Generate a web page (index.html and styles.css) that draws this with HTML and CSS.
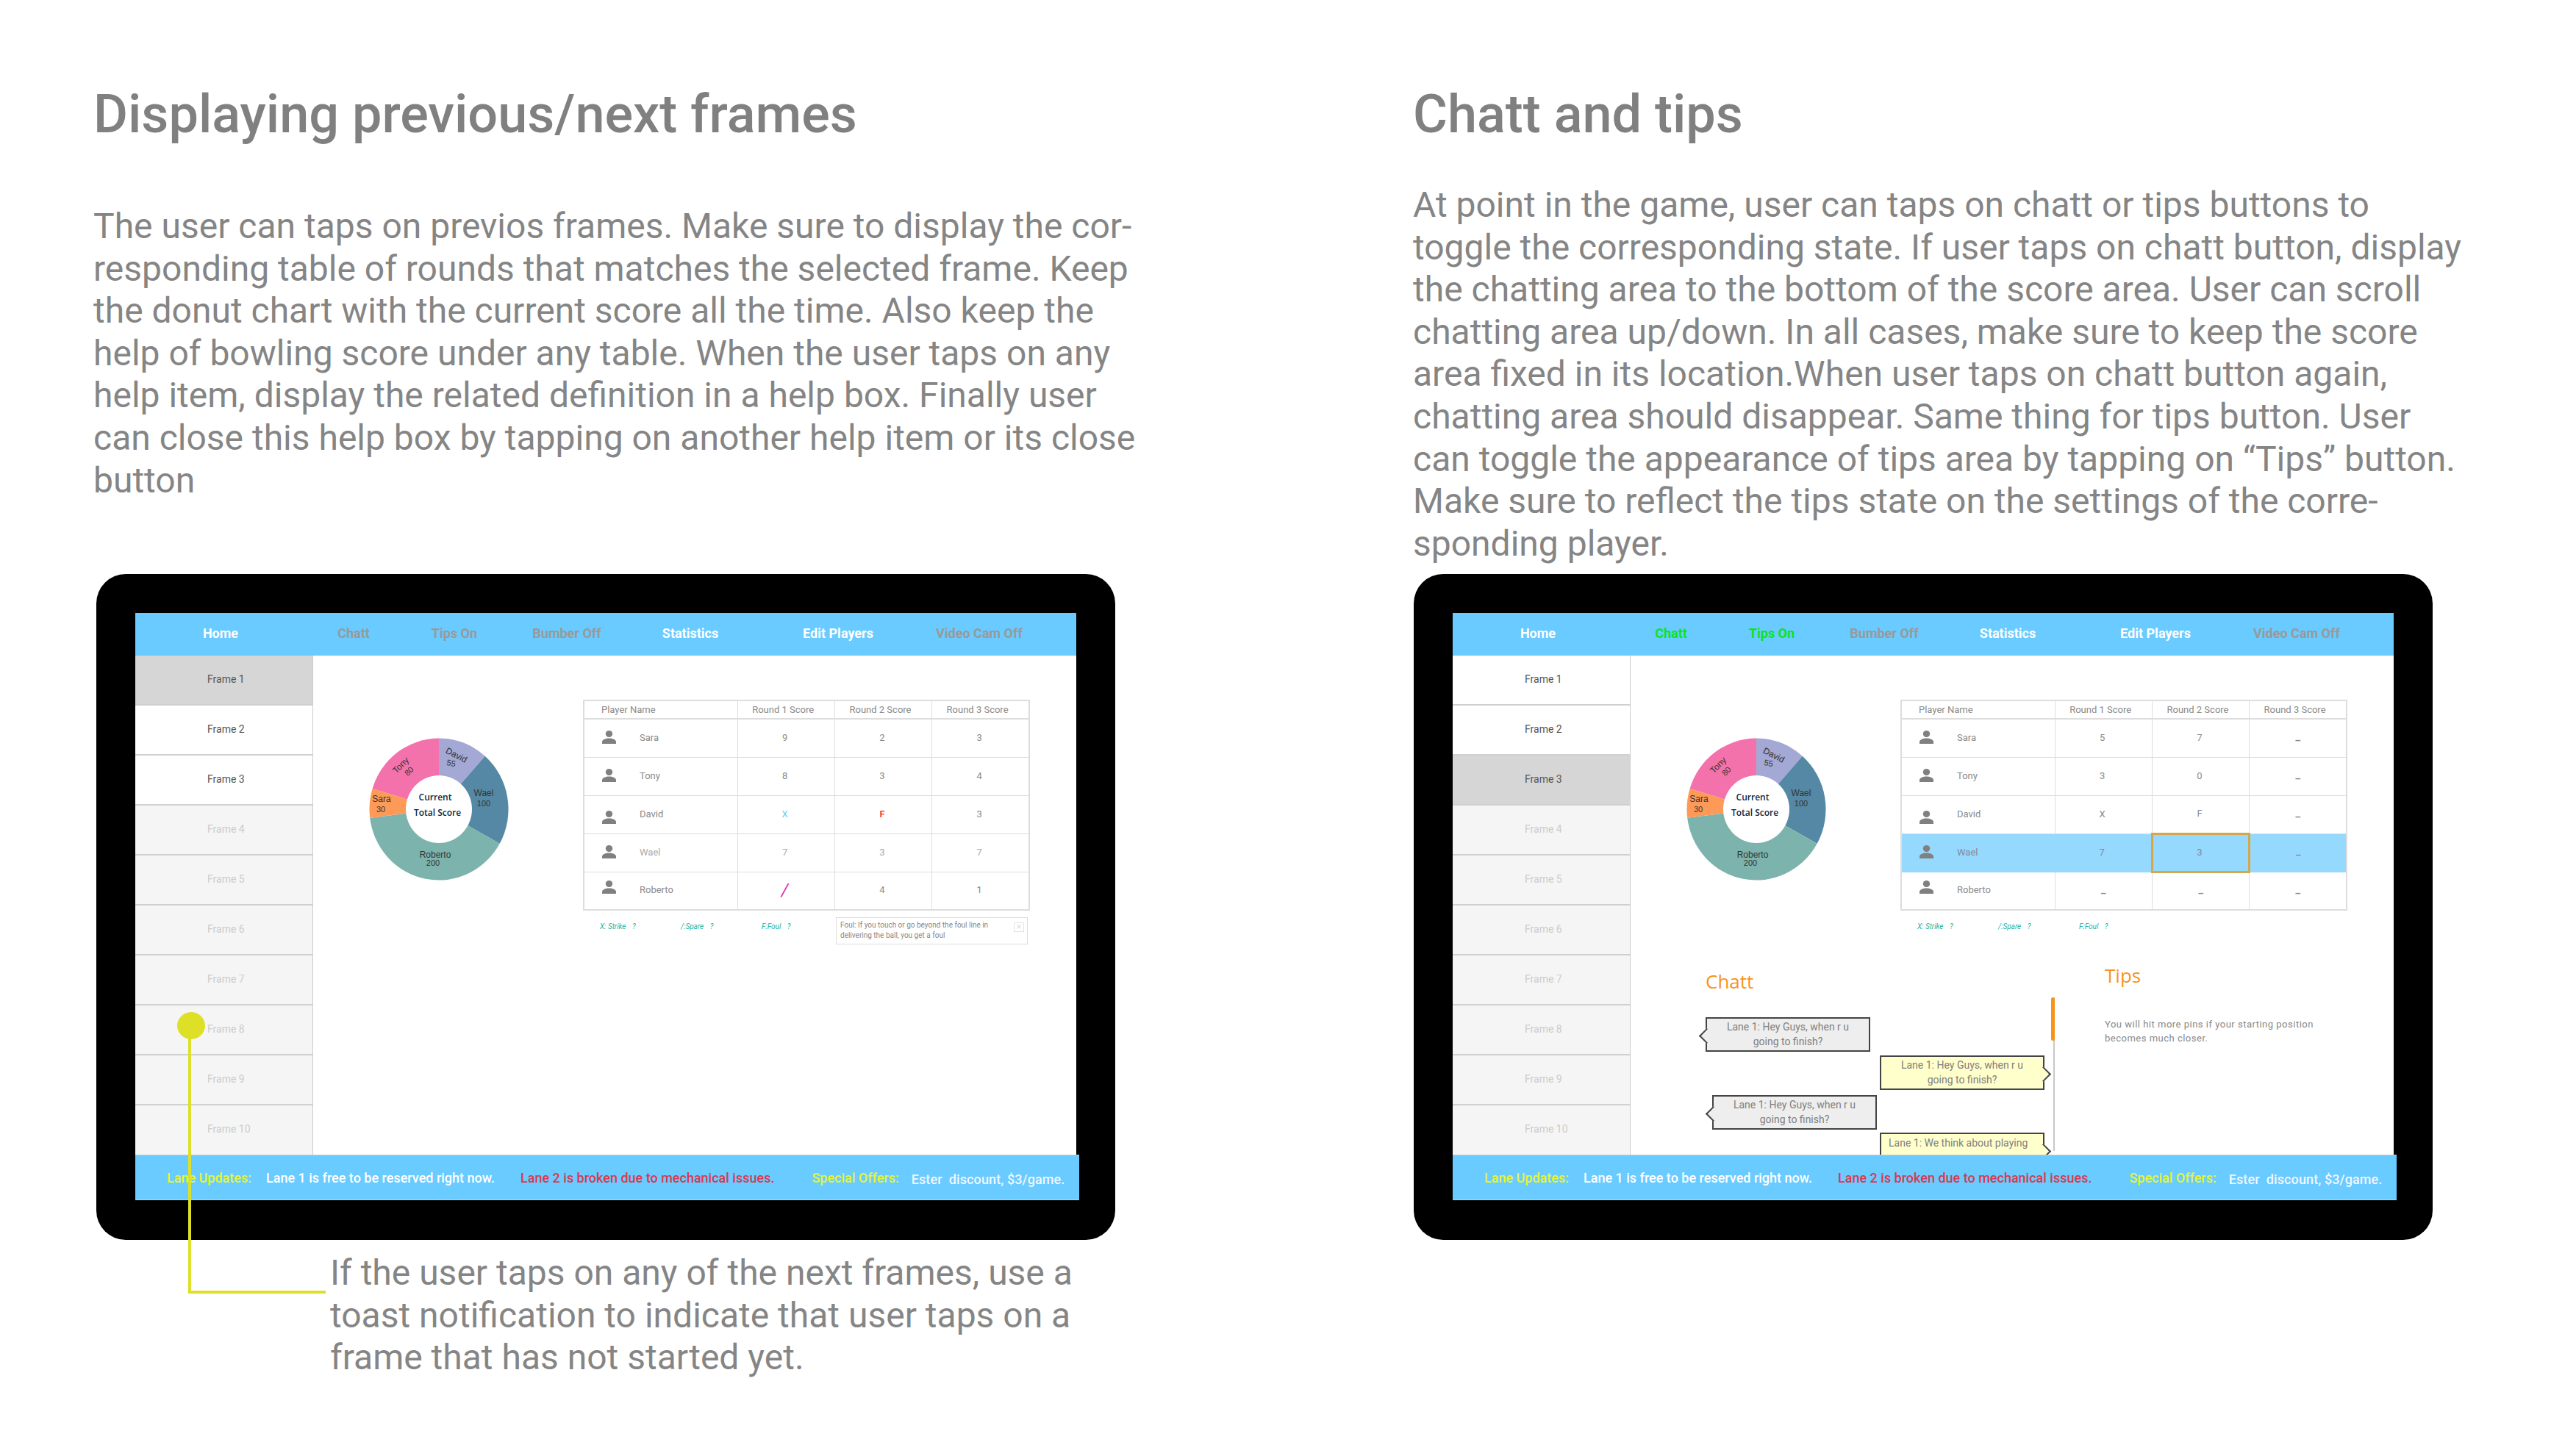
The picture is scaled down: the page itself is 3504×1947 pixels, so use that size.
FILE: index.html
```html
<!DOCTYPE html>
<html lang="en">
<head>
    <meta charset="UTF-8">
    <meta name="viewport" content="width=device-width, initial-scale=1.0">
    <title>Bowling score screens</title>
    <link rel="stylesheet" href="styles.css">
</head>
<body>
    <div class="page">

        <!-- left column -->
        <section class="col col-left">
            <div class="intro">
                <h2 class="title">Displaying previous/next frames</h2>
                <p class="copy copy-left">The user can taps on previos frames. Make sure to display the cor-<br>responding table of rounds that matches the selected frame. Keep<br>the donut chart with the current score all the time. Also keep the<br>help of bowling score under any table. When the user taps on any<br>help item, display the related definition in a help box. Finally user<br>can close this help box by tapping on another help item or its close<br>button</p>
            </div>

            <div class="device">
                <div class="screen">
                    <div class="nav">
                        <span class="nav-item n1">Home</span>
                        <span class="nav-item n2 off">Chatt</span>
                        <span class="nav-item n3 off">Tips On</span>
                        <span class="nav-item n4 off">Bumber Off</span>
                        <span class="nav-item n5">Statistics</span>
                        <span class="nav-item n6">Edit Players</span>
                        <span class="nav-item n7 off">Video Cam Off</span>
                    </div>
                    <div class="body">
                        <div class="frames">
                            <div class="frame current">Frame 1</div>
                            <div class="frame">Frame 2</div>
                            <div class="frame">Frame 3</div>
                            <div class="frame later">Frame 4</div>
                            <div class="frame later">Frame 5</div>
                            <div class="frame later">Frame 6</div>
                            <div class="frame later">Frame 7</div>
                            <div class="frame later">Frame 8</div>
                            <div class="frame later">Frame 9</div>
                            <div class="frame later">Frame 10</div>
                        </div>
                        <div class="main">
                            <div class="top-row">
                                <svg class="donut" width="190" height="194" viewBox="0 0 190 194">
                                    <path fill="#f472ab" d="M95 97L4.6 69.1A94.5 96.5 0 0 1 95 .5Z"/>
                                    <path fill="#a3a8d4" d="M95 97V.5A94.5 96.5 0 0 1 157.7 24.8Z"/>
                                    <path fill="#5588a4" d="M95 97L157.7 24.8A94.5 96.5 0 0 1 177.7 143.8Z"/>
                                    <path fill="#7cb3ad" d="M95 97L177.7 143.8A94.5 96.5 0 0 1 1.2 108.8Z"/>
                                    <path fill="#fd9a57" d="M95 97L1.2 108.8A94.5 96.5 0 0 1 4.6 69.1Z"/>
                                    <ellipse fill="#fff" cx="95" cy="97" rx="45" ry="46"/>
                                    <text class="pie-name" text-anchor="middle" transform="translate(117 27) rotate(27)">David</text>
                                    <text class="pie-num" text-anchor="middle" transform="translate(111 38) rotate(12)">55</text>
                                    <text class="pie-name" text-anchor="middle" transform="translate(46 40) rotate(-45)">Tony</text>
                                    <text class="pie-num" text-anchor="middle" transform="translate(57 48) rotate(-45)">80</text>
                                    <text class="pie-name" text-anchor="middle" x="156" y="79">Wael</text>
                                    <text class="pie-num" text-anchor="middle" x="156" y="93">100</text>
                                    <text class="pie-name" text-anchor="middle" x="17" y="87">Sara</text>
                                    <text class="pie-num" text-anchor="middle" x="16" y="101">30</text>
                                    <text class="pie-name" text-anchor="middle" x="90" y="163">Roberto</text>
                                    <text class="pie-num" text-anchor="middle" x="87" y="174">200</text>
                                    <text class="pie-total" text-anchor="middle" x="90" y="85">Current</text>
                                    <text class="pie-total" text-anchor="middle" x="93" y="106">Total Score</text>
                                </svg>
                                <div class="score">
                                    <table class="score-table">
                                        <tr><th class="c-name">Player Name</th><th>Round 1 Score</th><th>Round 2 Score</th><th>Round 3 Score</th></tr>
                                        <tr>
                                            <td class="c-name"><div class="player"><svg class="person" width="19" height="18" viewBox="0 0 19 18"><ellipse cx="9.5" cy="4.5" rx="4.7" ry="4.5"/><path d="M0 18V15.5C0 12 5 10.5 9.5 10.5S19 12 19 15.5V18Z"/></svg><span>Sara</span></div></td>
                                            <td>9</td><td>2</td><td>3</td>
                                        </tr>
                                        <tr>
                                            <td class="c-name"><div class="player"><svg class="person" width="19" height="18" viewBox="0 0 19 18"><ellipse cx="9.5" cy="4.5" rx="4.7" ry="4.5"/><path d="M0 18V15.5C0 12 5 10.5 9.5 10.5S19 12 19 15.5V18Z"/></svg><span>Tony</span></div></td>
                                            <td>8</td><td>3</td><td>4</td>
                                        </tr>
                                        <tr>
                                            <td class="c-name"><div class="player"><svg class="person low" width="19" height="18" viewBox="0 0 19 18"><ellipse cx="9.5" cy="4.5" rx="4.7" ry="4.5"/><path d="M0 18V15.5C0 12 5 10.5 9.5 10.5S19 12 19 15.5V18Z"/></svg><span>David</span></div></td>
                                            <td class="strike">X</td><td class="foul">F</td><td>3</td>
                                        </tr>
                                        <tr class="dim">
                                            <td class="c-name"><div class="player"><svg class="person" width="19" height="18" viewBox="0 0 19 18"><ellipse cx="9.5" cy="4.5" rx="4.7" ry="4.5"/><path d="M0 18V15.5C0 12 5 10.5 9.5 10.5S19 12 19 15.5V18Z"/></svg><span>Wael</span></div></td>
                                            <td>7</td><td>3</td><td>7</td>
                                        </tr>
                                        <tr>
                                            <td class="c-name"><div class="player"><svg class="person high" width="19" height="18" viewBox="0 0 19 18"><ellipse cx="9.5" cy="4.5" rx="4.7" ry="4.5"/><path d="M0 18V15.5C0 12 5 10.5 9.5 10.5S19 12 19 15.5V18Z"/></svg><span>Roberto</span></div></td>
                                            <td class="spare">/</td><td>4</td><td>1</td>
                                        </tr>
                                    </table>
                                    <div class="legend">
                                        <span class="legend-item l1">X: Strike <i>?</i></span>
                                        <span class="legend-item l2">/:Spare <i>?</i></span>
                                        <span class="legend-item l3">F:Foul <i>?</i></span>
                                        <div class="help-box">Foul: If you touch or go beyond the foul line in<br>delivering the ball, you get a foul<span class="help-close">×</span></div>
                                    </div>
                                </div>
                            </div>
                        </div>
                    </div>
                    <div class="ticker">
                        <span class="t-offer">Lane Updates:</span>
                        <span class="t-free">Lane 1 is free to be reserved right now.</span>
                        <span class="t-broken">Lane 2 is broken due to mechanical issues.</span>
                        <span class="t-offer t-special">Special Offers:</span>
                        <span class="t-ester">Ester&nbsp; discount, $3/game.</span>
                    </div>
                </div>

                <!-- yellow callout to the text under the tablet -->
                <div class="callout-dot"></div>
                <div class="callout-line"></div>
            </div>

            <p class="copy caption">If the user taps on any of the next frames, use a<br>toast notification to indicate that user taps on a<br>frame that has not started yet.</p>
        </section>

        <!-- right column -->
        <section class="col col-right">
            <div class="intro">
                <h2 class="title">Chatt and tips</h2>
                <p class="copy copy-right">At point in the game, user can taps on chatt or tips buttons to<br>toggle the corresponding state. If user taps on chatt button, display<br>the chatting area to the bottom of the score area. User can scroll<br>chatting area up/down. In all cases, make sure to keep the score<br>area fixed in its location.When user taps on chatt button again,<br>chatting area should disappear. Same thing for tips button. User<br>can toggle the appearance of tips area by tapping on “Tips” button.<br>Make sure to reflect the tips state on the settings of the corre-<br>sponding player.</p>
            </div>

            <div class="device">
                <div class="screen">
                    <div class="nav">
                        <span class="nav-item n1">Home</span>
                        <span class="nav-item n2 on">Chatt</span>
                        <span class="nav-item n3 on">Tips On</span>
                        <span class="nav-item n4 off">Bumber Off</span>
                        <span class="nav-item n5">Statistics</span>
                        <span class="nav-item n6">Edit Players</span>
                        <span class="nav-item n7 off">Video Cam Off</span>
                    </div>
                    <div class="body">
                        <div class="frames">
                            <div class="frame">Frame 1</div>
                            <div class="frame">Frame 2</div>
                            <div class="frame current">Frame 3</div>
                            <div class="frame later">Frame 4</div>
                            <div class="frame later">Frame 5</div>
                            <div class="frame later">Frame 6</div>
                            <div class="frame later">Frame 7</div>
                            <div class="frame later">Frame 8</div>
                            <div class="frame later">Frame 9</div>
                            <div class="frame later">Frame 10</div>
                        </div>
                        <div class="main">
                            <div class="top-row">
                                <svg class="donut" width="190" height="194" viewBox="0 0 190 194">
                                    <path fill="#f472ab" d="M95 97L4.6 69.1A94.5 96.5 0 0 1 95 .5Z"/>
                                    <path fill="#a3a8d4" d="M95 97V.5A94.5 96.5 0 0 1 157.7 24.8Z"/>
                                    <path fill="#5588a4" d="M95 97L157.7 24.8A94.5 96.5 0 0 1 177.7 143.8Z"/>
                                    <path fill="#7cb3ad" d="M95 97L177.7 143.8A94.5 96.5 0 0 1 1.2 108.8Z"/>
                                    <path fill="#fd9a57" d="M95 97L1.2 108.8A94.5 96.5 0 0 1 4.6 69.1Z"/>
                                    <ellipse fill="#fff" cx="95" cy="97" rx="45" ry="46"/>
                                    <text class="pie-name" text-anchor="middle" transform="translate(117 27) rotate(27)">David</text>
                                    <text class="pie-num" text-anchor="middle" transform="translate(111 38) rotate(12)">55</text>
                                    <text class="pie-name" text-anchor="middle" transform="translate(46 40) rotate(-45)">Tony</text>
                                    <text class="pie-num" text-anchor="middle" transform="translate(57 48) rotate(-45)">80</text>
                                    <text class="pie-name" text-anchor="middle" x="156" y="79">Wael</text>
                                    <text class="pie-num" text-anchor="middle" x="156" y="93">100</text>
                                    <text class="pie-name" text-anchor="middle" x="17" y="87">Sara</text>
                                    <text class="pie-num" text-anchor="middle" x="16" y="101">30</text>
                                    <text class="pie-name" text-anchor="middle" x="90" y="163">Roberto</text>
                                    <text class="pie-num" text-anchor="middle" x="87" y="174">200</text>
                                    <text class="pie-total" text-anchor="middle" x="90" y="85">Current</text>
                                    <text class="pie-total" text-anchor="middle" x="93" y="106">Total Score</text>
                                </svg>
                                <div class="score">
                                    <table class="score-table">
                                        <tr><th class="c-name">Player Name</th><th>Round 1 Score</th><th>Round 2 Score</th><th>Round 3 Score</th></tr>
                                        <tr>
                                            <td class="c-name"><div class="player"><svg class="person" width="19" height="18" viewBox="0 0 19 18"><ellipse cx="9.5" cy="4.5" rx="4.7" ry="4.5"/><path d="M0 18V15.5C0 12 5 10.5 9.5 10.5S19 12 19 15.5V18Z"/></svg><span>Sara</span></div></td>
                                            <td>5</td><td>7</td><td class="dash">–</td>
                                        </tr>
                                        <tr>
                                            <td class="c-name"><div class="player"><svg class="person" width="19" height="18" viewBox="0 0 19 18"><ellipse cx="9.5" cy="4.5" rx="4.7" ry="4.5"/><path d="M0 18V15.5C0 12 5 10.5 9.5 10.5S19 12 19 15.5V18Z"/></svg><span>Tony</span></div></td>
                                            <td>3</td><td>0</td><td class="dash">–</td>
                                        </tr>
                                        <tr>
                                            <td class="c-name"><div class="player"><svg class="person low" width="19" height="18" viewBox="0 0 19 18"><ellipse cx="9.5" cy="4.5" rx="4.7" ry="4.5"/><path d="M0 18V15.5C0 12 5 10.5 9.5 10.5S19 12 19 15.5V18Z"/></svg><span>David</span></div></td>
                                            <td>X</td><td>F</td><td class="dash">–</td>
                                        </tr>
                                        <tr class="dim selected">
                                            <td class="c-name"><div class="player"><svg class="person" width="19" height="18" viewBox="0 0 19 18"><ellipse cx="9.5" cy="4.5" rx="4.7" ry="4.5"/><path d="M0 18V15.5C0 12 5 10.5 9.5 10.5S19 12 19 15.5V18Z"/></svg><span>Wael</span></div></td>
                                            <td>7</td><td class="picked">3</td><td class="dash">–</td>
                                        </tr>
                                        <tr>
                                            <td class="c-name"><div class="player"><svg class="person high" width="19" height="18" viewBox="0 0 19 18"><ellipse cx="9.5" cy="4.5" rx="4.7" ry="4.5"/><path d="M0 18V15.5C0 12 5 10.5 9.5 10.5S19 12 19 15.5V18Z"/></svg><span>Roberto</span></div></td>
                                            <td class="dash">–</td><td class="dash">–</td><td class="dash">–</td>
                                        </tr>
                                    </table>
                                    <div class="legend">
                                        <span class="legend-item l1">X: Strike <i>?</i></span>
                                        <span class="legend-item l2">/:Spare <i>?</i></span>
                                        <span class="legend-item l3">F:Foul <i>?</i></span>
                                    </div>
                                </div>
                            </div>
                            <div class="extras">
                                <div class="chat">
                                    <div class="chat-title">Chatt</div>
                                    <div class="bubble them">Lane 1: Hey Guys, when r u<br>going to finish?</div>
                                    <div class="bubble me">Lane 1: Hey Guys, when r u<br>going to finish?</div>
                                    <div class="bubble them shifted">Lane 1: Hey Guys, when r u<br>going to finish?</div>
                                    <div class="bubble me cut">Lane 1: We think about playing</div>
                                </div>
                                <div class="chat-scroll"><div class="chat-thumb"></div></div>
                                <div class="tips">
                                    <div class="tips-title">Tips</div>
                                    <p class="tips-text">You will hit more pins if your starting position<br>becomes much closer.</p>
                                </div>
                            </div>
                        </div>
                    </div>
                    <div class="ticker">
                        <span class="t-offer">Lane Updates:</span>
                        <span class="t-free">Lane 1 is free to be reserved right now.</span>
                        <span class="t-broken">Lane 2 is broken due to mechanical issues.</span>
                        <span class="t-offer t-special">Special Offers:</span>
                        <span class="t-ester">Ester&nbsp; discount, $3/game.</span>
                    </div>
                </div>
            </div>
        </section>

    </div>
</body>
</html>
```
FILE: styles.css
```css
*{
    box-sizing: border-box;
}
body{
    margin: 0;
    background-color: #fff;
    font-family: Roboto, "Liberation Sans", sans-serif;
}
.page{
    display: flex;
    width: 3504px;
    height: 1947px;
    overflow: hidden;
}
.col-left{
    width: 1795px;
    margin-left: 127px;
}
.col-right{
    width: 1582px;
}

/* text blocks */
.intro{
    height: 781px;
}
.title{
    margin: 0;
    padding-top: 112px;
    font-size: 72px;
    line-height: 88px;
    font-weight: 500;
    color: #808080;
}
.copy{
    margin: 0;
    font-size: 48px;
    line-height: 57.6px;
    font-weight: 400;
    color: #858585;
}
.copy-left{
    margin-top: 79px;
}
.copy-right{
    margin-top: 50px;
}
.caption{
    margin: 16px 0 0 322px;
}

/* tablet */
.device{
    position: relative;
    width: 1386px;
    height: 906px;
    padding: 53px;
    border-radius: 40px;
    background-color: #000;
}
.col-left .device{
    margin-left: 4px;
}
.col-right .device{
    margin-left: 1px;
}
.screen{
    display: flex;
    flex-direction: column;
    width: 1280px;
    height: 799px;
    background-color: #fff;
}

.nav{
    display: flex;
    flex: none;
    height: 58px;
    background-color: #69cbff;
}
.nav-item{
    font-size: 18px;
    font-weight: 700;
    line-height: 56px;
    text-align: center;
    color: #fff;
}
.nav-item.off{
    color: #999;
}
.nav-item.on{
    color: #0be41f;
}
.n1{ width: 232px; }
.n2{ width: 130px; }
.n3{ width: 144px; }
.n4{ width: 162px; }
.n5{ width: 174px; }
.n6{ width: 228px; }
.n7{ width: 156px; }

.body{
    display: flex;
    flex: 1;
    min-height: 0;
}
.frames{
    flex: none;
    width: 242px;
    border-right: 1px solid #ccc;
}
.frame{
    height: 68px;
    padding-left: 98px;
    border-bottom: 2px solid #d0d0d0;
    font-size: 14px;
    line-height: 64px;
    color: #555;
}
.frame:last-child{
    border-bottom: 0;
}
.frame.current{
    background-color: #d6d6d6;
}
.frame.later{
    background-color: #f5f5f5;
    color: #ccc;
}

.main{
    flex: 1;
    min-width: 0;
    overflow: hidden;
}
.top-row{
    display: flex;
    align-items: flex-start;
    height: 424px;
}
.donut{
    flex: none;
    margin: 112px 0 0 76px;
}
.pie-name{
    font: 12px "Liberation Sans", sans-serif;
    fill: #333;
}
.pie-num{
    font: 11px "Liberation Sans", sans-serif;
    fill: #333;
}
.pie-total{
    font: 600 12px "Open Sans", sans-serif;
    fill: #0a2a43;
}

.score{
    flex: none;
    width: 608px;
    margin: 60px 0 0 101px;
}
.score-table{
    width: 608px;
    table-layout: fixed;
    border-collapse: collapse;
    border: 2px solid #ddd;
}
.score-table th, .score-table td{
    border: 1px solid #ddd;
    padding: 0;
    text-align: center;
    font-weight: 400;
    color: #8a8a8a;
}
.score-table th{
    height: 25px;
    padding-right: 8px;
    font-size: 13px;
    border-bottom-width: 2px;
}
.score-table td{
    height: 52px;
    padding: 0 3px 2px 0;
    font-size: 13px;
}
.score-table .c-name{
    width: 209px;
    text-align: left;
}
.score-table th.c-name{
    padding: 0 0 0 23px;
}
.player{
    display: flex;
    align-items: center;
    padding-left: 24px;
    font-size: 13px;
}
.person{
    flex: none;
    margin-right: 32px;
    fill: #808080;
}
.person.low{
    margin-top: 10px;
}
.person.high{
    margin-bottom: 8px;
}
.score-table .strike{
    color: #6ccaf5;
}
.score-table .foul{
    color: #f01f1f;
    font-weight: 500;
}
.score-table .spare{
    font-size: 24px;
    font-style: italic;
    color: #d92fae;
}
.score-table .dim td, .score-table .dim span{
    color: #aaa;
}
.score-table .dash{
    padding: 7px 0 0;
    font-weight: 700;
    color: #888;
}
.score-table .selected td{
    background-color: #95d9ff;
    border-color: #95d9ff;
}
.score-table .selected td, .score-table .selected span{
    color: #889;
}
.score-table .selected .picked{
    border: 3px solid #d4a74a;
}

.legend{
    display: flex;
    align-items: flex-start;
    padding: 9px 0 0 23px;
}
.legend-item{
    margin-top: 5px;
    font-size: 10px;
    line-height: 16px;
    font-style: italic;
    color: #22b5a4;
}
.legend-item i{
    margin-left: 6px;
}
.l1, .l2{ width: 110px; }
.l3{ width: 101px; }
.help-box{
    position: relative;
    width: 261px;
    height: 37px;
    padding: 3px 5px;
    border: 1px solid #ddd;
    font-size: 10px;
    line-height: 14px;
    color: #888;
}
.help-close{
    position: absolute;
    top: 6px;
    right: 4px;
    width: 14px;
    height: 13px;
    border: 1px solid #e4e4e4;
    font-size: 12px;
    line-height: 10px;
    text-align: center;
    color: #ddd;
}

/* chat + tips */
.extras{
    display: flex;
    align-items: flex-start;
    padding-left: 102px;
}
.chat{
    flex: none;
    display: flex;
    flex-direction: column;
    width: 461px;
}
.chat-title{
    margin: 6px 0 36px;
    font: 26px/26px "Open Sans", sans-serif;
    color: #f7941d;
}
.bubble{
    position: relative;
    flex: none;
    width: 224px;
    height: 47px;
    margin-bottom: 5px;
    padding-top: 1px;
    border: 2px solid #444;
    font-size: 14px;
    line-height: 20px;
    text-align: center;
    color: #808080;
}
.bubble::before{
    content: "";
    position: absolute;
    top: 16px;
    width: 13px;
    height: 13px;
    transform: rotate(45deg);
    border-style: solid;
    border-color: #444;
}
.bubble.them{
    align-self: flex-start;
    background-color: #eee;
}
.bubble.them::before{
    left: -8px;
    border-width: 0 0 2px 2px;
    background-color: #eee;
}
.bubble.me{
    align-self: flex-end;
    background-color: #ffc;
}
.bubble.me::before{
    right: -8px;
    border-width: 2px 2px 0 0;
    background-color: #ffc;
}
.bubble.shifted{
    margin-top: 2px;
    margin-left: 9px;
}
.bubble.cut{
    margin-top: -1px;
    padding: 2px 0 0 10px;
    text-align: left;
}
.chat-scroll{
    flex: none;
    width: 5px;
    height: 209px;
    margin: 41px 0 0 9px;
    background: linear-gradient(to right, transparent 3px, #c8c8c8 3px);
}
.chat-thumb{
    height: 59px;
    border-radius: 3px;
    background-color: #f7941d;
}
.tips{
    flex: none;
    width: 340px;
    margin-left: 68px;
}
.tips-title{
    margin-top: -2px;
    font: 26px/26px "Open Sans", sans-serif;
    color: #f7941d;
}
.tips-text{
    margin: 44px 0 0;
    font-size: 13px;
    line-height: 19px;
    letter-spacing: .5px;
    color: #888;
}

/* footer bar */
.ticker{
    position: relative;
    display: flex;
    flex: none;
    align-items: center;
    height: 62px;
    margin-right: -4px;
    padding-left: 43px;
    background-color: #69cbff;
    border-top: 1px solid #bcd;
    border-bottom: 1px solid #ccc;
    font-size: 18px;
    font-weight: 500;
    white-space: nowrap;
}
.t-offer{
    color: #e8f531;
}
.t-free{
    margin-left: 20px;
    color: #fff;
}
.t-broken{
    margin-left: 35px;
    color: #d8394f;
}
.t-special{
    margin-left: 51px;
}
.t-ester{
    margin: 4px 0 0 17px;
    letter-spacing: .1px;
    color: #f2f7ff;
}

/* callout */
.callout-dot{
    position: absolute;
    left: 110px;
    top: 596px;
    width: 38px;
    height: 37px;
    border-radius: 50%;
    background-color: #dde026;
}
.callout-line{
    position: absolute;
    left: 125px;
    top: 630px;
    width: 187px;
    height: 349px;
    border-left: 4px solid #dde026;
    border-bottom: 4px solid #dde026;
}
```
